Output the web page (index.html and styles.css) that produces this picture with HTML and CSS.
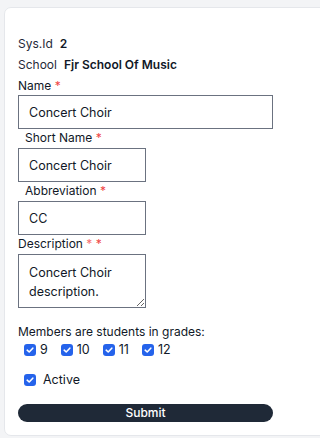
FILE: index.html
```html
<!DOCTYPE html>
<html lang="en">
<head>
<meta charset="utf-8">
<title>Group</title>
<link rel="stylesheet" href="styles.css">
</head>
<body>
<div class="page">
<div class="card">
  <form class="form">
    <div class="info"><span class="info-label">Sys.Id</span><span class="info-value">2</span></div>
    <div class="info"><span class="info-label">School</span><span class="info-value">Fjr School Of Music</span></div>

    <label class="label">Name <span class="req">*</span></label>
    <input class="input wide" type="text" value="Concert Choir">

    <label class="label indent">Short Name <span class="req">*</span></label>
    <input class="input narrow" type="text" value="Concert Choir">

    <label class="label indent">Abbreviation <span class="req">*</span></label>
    <input class="input narrow" type="text" value="CC">

    <label class="label indent-none">Description <span class="req light">*</span> <span class="req">*</span></label>
    <textarea class="textarea">Concert Choir description.</textarea>

    <div class="grades-title">Members are students in grades:</div>
    <div class="grades">
      <label class="grade"><span class="check"><svg viewBox="0 0 12 12"><path d="M3.2 6.2 L5.2 8 L8.8 4.2" /></svg></span>9</label>
      <label class="grade"><span class="check"><svg viewBox="0 0 12 12"><path d="M3.2 6.2 L5.2 8 L8.8 4.2" /></svg></span>10</label>
      <label class="grade"><span class="check"><svg viewBox="0 0 12 12"><path d="M3.2 6.2 L5.2 8 L8.8 4.2" /></svg></span>11</label>
      <label class="grade"><span class="check"><svg viewBox="0 0 12 12"><path d="M3.2 6.2 L5.2 8 L8.8 4.2" /></svg></span>12</label>
    </div>

    <label class="active"><span class="check"><svg viewBox="0 0 12 12"><path d="M3.2 6.2 L5.2 8 L8.8 4.2" /></svg></span>Active</label>

    <button class="submit" type="button">Submit</button>
  </form>
</div>
</div>
</body>
</html>
```

FILE: styles.css
```css
* { box-sizing: border-box; }
html, body {
  margin: 0;
  padding: 0;
  height: 438px;
  overflow: hidden;
}
body {
  background: #f3f4f6;
  font-family: Inter, "Liberation Sans", sans-serif;
  font-size: 12px;
  color: #111827;
}
.page {
  height: 438px;
  overflow: hidden;
  padding: 7px 0 0 4px;
}
.card {
  width: 340px;
  height: 429px;
  background: #fff;
  border: 1px solid #e5e7eb;
  border-radius: 7px;
  padding: 28px 13px 0 13px;
}
.form {
  width: 255px;
  display: flex;
  flex-direction: column;
  align-items: flex-start;
}
.info {
  display: flex;
  gap: 7px;
  line-height: 16px;
  margin-bottom: 5px;
}
.info-label { color: #1f2937; }
.info-value { font-weight: 600; color: #111827; }
.label {
  line-height: 16px;
  margin-bottom: 1px;
  color: #111827;
}
.label.indent { padding-left: 7px; margin-top: 1px; margin-bottom: 2px; }
.label.indent-none { margin-top: 1px; margin-bottom: 2px; }
.req { color: #ef4444; }
.req.light { color: #f87171; }
.input {
  height: 34px;
  border: 1px solid #6b7280;
  border-radius: 0;
  padding: 0 10px;
  font: inherit;
  font-size: 12.5px;
  color: #111827;
  background: #fff;
  outline: none;
}
.input.wide { width: 255px; }
.input.narrow { width: 128px; }
.textarea {
  width: 128px;
  height: 54px;
  border: 1px solid #6b7280;
  border-radius: 0;
  padding: 8px 10px;
  font: inherit;
  font-size: 12.5px;
  line-height: 19px;
  color: #111827;
  resize: vertical;
  overflow: hidden;
}
.grades-title {
  margin-top: 16px;
  line-height: 16px;
}
.grades {
  display: flex;
  gap: 13px;
  margin-top: 2px;
  padding-left: 6px;
}
.grade, .active {
  display: flex;
  align-items: center;
  gap: 4px;
  line-height: 16px;
  font-size: 12.5px;
}
.active {
  gap: 7px;
  margin-top: 14px;
  padding-left: 6px;
}
.check {
  width: 12px;
  height: 12px;
  border-radius: 3px;
  background: #2563eb;
  display: inline-flex;
}
.check svg {
  width: 12px;
  height: 12px;
  fill: none;
  stroke: #fff;
  stroke-width: 1.6;
  stroke-linecap: round;
  stroke-linejoin: round;
}
.submit {
  margin-top: 16px;
  width: 255px;
  height: 18px;
  border: none;
  border-radius: 9px;
  background: #1f2937;
  color: #fff;
  font: inherit;
  font-size: 12px;
  font-weight: 500;
  padding: 0;
  line-height: 18px;
}
```
